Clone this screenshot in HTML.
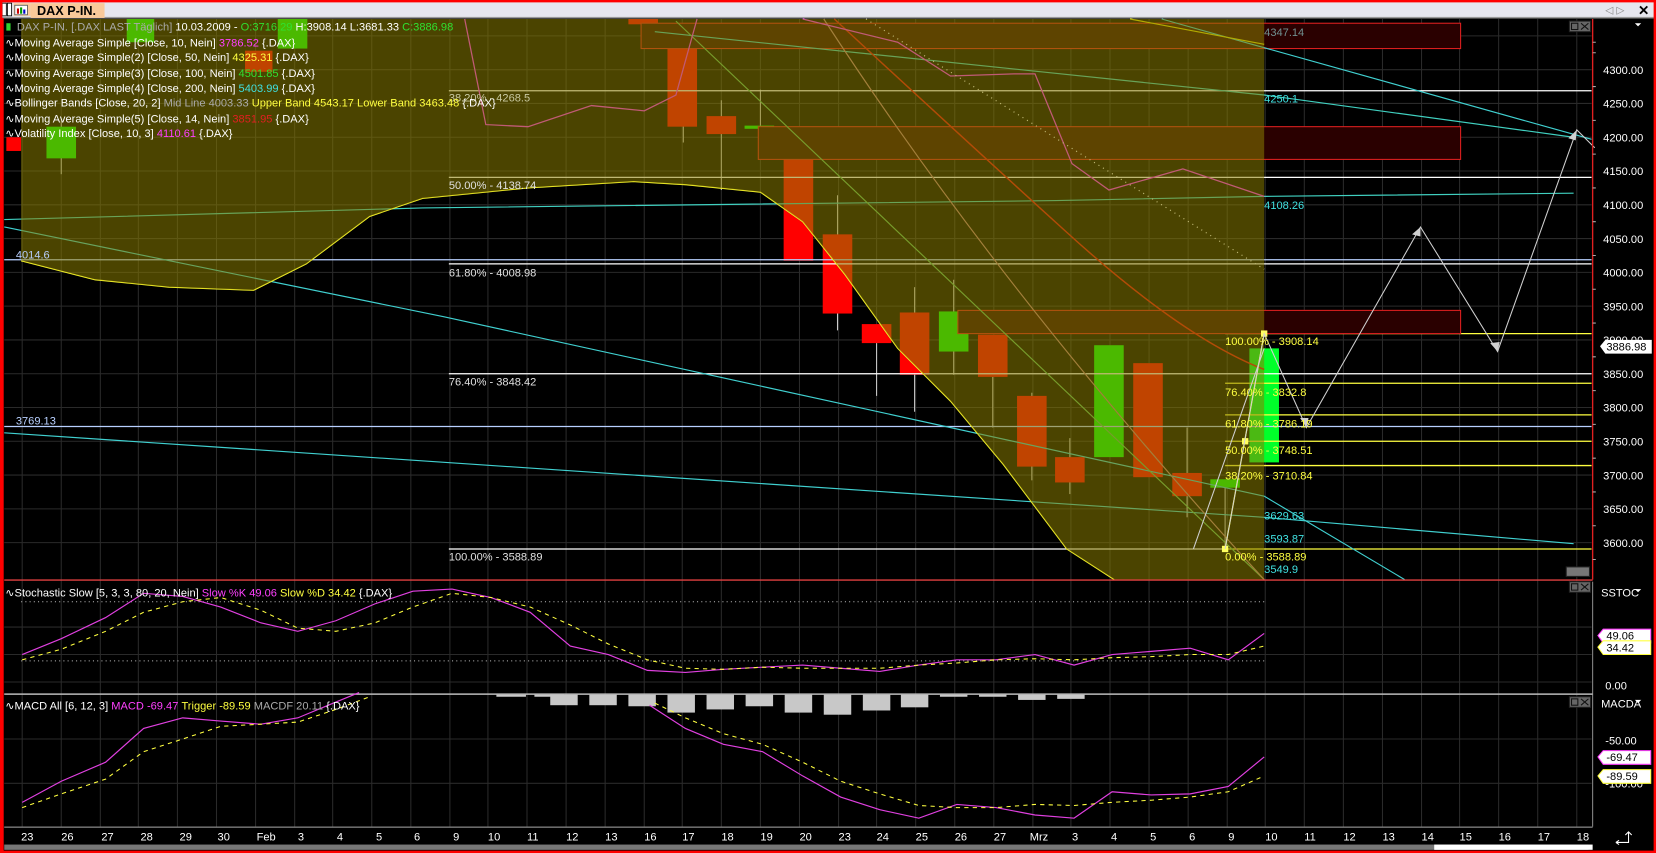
<!DOCTYPE html>
<html><head><meta charset="utf-8"><style>
html,body{margin:0;padding:0;background:#000;overflow:hidden}
svg{display:block}
text{font-family:"Liberation Sans",sans-serif;font-size:10.5px}
</style></head><body>
<svg width="1656" height="853" viewBox="0 0 1568 808" preserveAspectRatio="none" xmlns="http://www.w3.org/2000/svg">
<rect x="0" y="0" width="1568" height="808" fill="#000"/>
<!-- title bar -->
<rect x="0" y="0" width="1568" height="17" fill="#e6e6ee"/>
<rect x="0" y="16" width="1568" height="1.5" fill="#999"/>
<rect x="2" y="3" width="4" height="12" fill="#fff" stroke="#000" stroke-width="0.8"/>
<rect x="7" y="3" width="4" height="12" fill="#fff" stroke="#000" stroke-width="0.8"/>
<rect x="13" y="3" width="16" height="12" fill="#f9c99a"/>
<rect x="14" y="5" width="12" height="9" fill="#fff" stroke="#555" stroke-width="0.8"/>
<rect x="16" y="8" width="2" height="5" fill="#c00"/><rect x="19" y="7" width="2" height="6" fill="#090"/><rect x="22" y="9" width="2" height="4" fill="#00c"/>
<rect x="29" y="3" width="70" height="14" fill="#f9c99a"/>
<text x="35" y="14" style="font-size:12px;font-weight:bold" fill="#000">DAX P-IN.</text>
<text x="1520" y="13" fill="#888" style="font-size:10px">◁ ▷</text>
<text x="1551" y="14" fill="#000" style="font-size:13px;font-weight:bold">✕</text>

<!-- grid -->
<g stroke="#2a2a2a" stroke-width="1">
<path d="M21 18V783M58 18V783M95 18V783M131 18V783M168 18V783M205 18V783M242 18V783M279 18V783M315 18V783M352 18V783M389 18V783M426 18V783M462 18V783M499 18V783M536 18V783M573 18V783M610 18V783M646 18V783M683 18V783M720 18V783M757 18V783M794 18V783M830 18V783M867 18V783M904 18V783M941 18V783M978 18V783M1014 18V783M1051 18V783M1088 18V783M1125 18V783M1162 18V783M1198 18V783M1235 18V783M1272 18V783M1309 18V783M1346 18V783M1382 18V783M1419 18V783M1456 18V783M1493 18V783"/>
<path d="M4 34H1507M4 66H1507M4 98H1507M4 130H1507M4 162H1507M4 194H1507M4 226H1507M4 258H1507M4 290H1507M4 322H1507M4 354H1507M4 386H1507M4 418H1507M4 450H1507M4 482H1507M4 514H1507M4 594H1507M4 620H1507M4 646H1507M4 700H1507M4 742H1507"/>
</g>

<!-- candles -->
<g>
<rect x="6" y="130" width="14" height="13" fill="#ff0000"/>
<line x1="58" y1="115" x2="58" y2="165" stroke="#ccc"/><rect x="44" y="120" width="28" height="30" fill="#00ff00"/>
<rect x="120" y="18" width="26" height="22" fill="#00ff00"/>
<rect x="232" y="48" width="26" height="20" fill="#ff0000"/>
<rect x="263" y="18" width="28" height="28" fill="#00ff00"/>
<rect x="595" y="18" width="28" height="5" fill="#ff0000"/>
<line x1="647" y1="40" x2="647" y2="135" stroke="#ccc"/><rect x="632" y="45" width="28" height="75" fill="#ff0000"/>
<line x1="683" y1="95" x2="683" y2="180" stroke="#ccc"/><rect x="669" y="110" width="28" height="17" fill="#ff0000"/>
<rect x="705" y="119" width="28" height="3" fill="#00ff00"/><line x1="720" y1="85" x2="720" y2="119" stroke="#ccc"/>
<rect x="742" y="150" width="28" height="97" fill="#ff0000"/>
<line x1="793" y1="185" x2="793" y2="313" stroke="#ccc"/><rect x="779" y="222" width="28" height="75" fill="#ff0000"/>
<line x1="830" y1="325" x2="830" y2="375" stroke="#ccc"/><rect x="816" y="307" width="28" height="18" fill="#ff0000"/>
<line x1="866" y1="272" x2="866" y2="390" stroke="#ccc"/><rect x="852" y="296" width="28" height="59" fill="#ff0000"/>
<line x1="903" y1="265" x2="903" y2="355" stroke="#ccc"/><rect x="889" y="295" width="28" height="38" fill="#00ff00"/>
<line x1="940" y1="357" x2="940" y2="405" stroke="#ccc"/><rect x="926" y="317" width="28" height="40" fill="#ff0000"/>
<line x1="977" y1="372" x2="977" y2="455" stroke="#ccc"/><rect x="963" y="375" width="28" height="67" fill="#ff0000"/>
<line x1="1013" y1="415" x2="1013" y2="468" stroke="#ccc"/><rect x="999" y="433" width="28" height="24" fill="#ff0000"/>
<rect x="1036" y="327" width="28" height="106" fill="#00ff00"/>
<rect x="1073" y="344" width="28" height="108" fill="#ff0000"/>
<line x1="1124" y1="405" x2="1124" y2="490" stroke="#ccc"/><rect x="1110" y="448" width="28" height="22" fill="#ff0000"/>
<line x1="1160" y1="462" x2="1160" y2="520" stroke="#ccc"/><rect x="1146" y="454" width="28" height="8" fill="#00ff00"/>
<rect x="1183" y="330" width="28" height="108" fill="#00ff2a"/>
</g>

<!-- horizontal lines -->
<g stroke-width="1.2">
<line x1="425" y1="86" x2="1507" y2="86" stroke="#fff"/>
<line x1="425" y1="168" x2="1507" y2="168" stroke="#fff"/>
<line x1="425" y1="250" x2="1507" y2="250" stroke="#fff"/>
<line x1="4" y1="246" x2="1507" y2="246" stroke="#b8d0ff"/>
<line x1="425" y1="354" x2="1507" y2="354" stroke="#fff"/>
<line x1="425" y1="520" x2="1160" y2="520" stroke="#fff"/>
<line x1="4" y1="404" x2="1507" y2="404" stroke="#b8d0ff"/>
<line x1="1160" y1="316" x2="1507" y2="316" stroke="#ffff40"/>
<line x1="1160" y1="363" x2="1507" y2="363" stroke="#ffff40"/>
<line x1="1160" y1="393" x2="1507" y2="393" stroke="#ffff40"/>
<line x1="1160" y1="418" x2="1507" y2="418" stroke="#ffff40"/>
<line x1="1160" y1="441" x2="1507" y2="441" stroke="#ffff40"/>
<line x1="1160" y1="520" x2="1507" y2="520" stroke="#ffff40"/>
</g>
<!-- red boxes -->
<g fill="#2a0000" stroke="#e02020" stroke-width="1">
<rect x="607" y="22" width="776" height="24"/>
<rect x="718" y="120" width="665" height="31"/>
<rect x="907" y="294" width="476" height="22"/>
</g>
<!-- trend lines -->
<g fill="none" stroke-width="1.1">
<path d="M4 208L400 197 1000 190 1197 186 1490 183" stroke="#40d0c0"/>
<path d="M4 215L420 300 1197 470 1330 549" stroke="#40d0d0"/>
<path d="M4 410L1197 490 1490 515" stroke="#40d0d0"/>
<path d="M4 405L1100 520" stroke="#40d0d0" stroke-opacity="0"/>
<path d="M620 30L1197 90 1490 130" stroke="#40d0c0"/>
<path d="M1100 18L1507 132" stroke="#40d0d0"/>
<path d="M640 20L1197 549" stroke="#60c060"/>
<path d="M4 215L1197 549" stroke="#60c060" stroke-opacity="0"/>
<path d="M1070 18L1197 42" stroke="#e0e000"/>
<path d="M790 18Q900 120 1010 220T1197 350" stroke="#e01010" stroke-width="1.4"/>
<path d="M780 18Q950 280 1197 549" stroke="#c08080"/>
<path d="M440 18L460 118 500 120 560 100 610 105 640 90 660 18M760 18L850 40 900 72 960 70 980 70 1015 155 1050 180 1120 160 1197 186" stroke="#ff30ff" stroke-width="1.2"/>
<path d="M820 18L1197 255" stroke="#fff" stroke-dasharray="1 4"/>
<path d="M20 247L90 265 160 272 240 275 290 250 350 205 400 188 500 178 600 172 650 175 720 182 760 210 800 260 850 330 900 380 950 440 1010 520 1055 549" stroke="#ffff30"/>
</g>
<!-- olive band overlay -->
<path d="M20 18H1197V549H1055L1010 520 950 440 900 380 850 330 800 260 760 210 720 182 650 175 600 172 500 178 400 188 350 205 290 250 240 275 160 272 90 265 20 247Z" fill="rgba(138,125,0,0.54)"/>
<!-- fib diagonal + arrows -->
<path d="M1160 520L1197 316" stroke="#ffff30" stroke-width="1.2" fill="none"/>
<rect x="1157" y="517" width="6" height="6" fill="#ffff60"/><rect x="1194" y="313" width="6" height="6" fill="#ffff60"/><rect x="1176" y="415" width="6" height="6" fill="#ffff60"/>
<path d="M1160 520L1197 316 1237 405 1345 215 1418 333 1493 123 1510 140M1130 520L1197 330" stroke="#d0d0d0" stroke-width="1" fill="none"/>
<path d="M1237 405l-6-9 8 0zM1345 215l-8 7 8 2zM1418 333l-7-8 9-1zM1493 123l-8 8 7 2z" fill="#d0d0d0"/>

<!-- labels -->
<g fill="#e0e0e0">
<text x="425" y="96" fill="#c8c8a0">38.20% - 4268.5</text>
<text x="425" y="179">50.00% - 4138.74</text>
<text x="425" y="262">61.80% - 4008.98</text>
<text x="425" y="365">76.40% - 3848.42</text>
<text x="425" y="531">100.00% - 3588.89</text>
<text x="15" y="245" fill="#b8d0ff">4014.6</text>
<text x="15" y="402" fill="#b8d0ff">3769.13</text>
</g>
<g fill="#ffff40">
<text x="1160" y="327">100.00% - 3908.14</text>
<text x="1160" y="375">76.40% - 3832.8</text>
<text x="1160" y="405">61.80% - 3786.19</text>
<text x="1160" y="430">50.00% - 3748.51</text>
<text x="1160" y="454">38.20% - 3710.84</text>
<text x="1160" y="531">0.00% - 3588.89</text>
</g>
<g fill="#40e0e0">
<text x="1197" y="34" fill="#709090">4347.14</text>
<text x="1197" y="97">4250.1</text>
<text x="1197" y="198">4108.26</text>
<text x="1197" y="492">3629.63</text>
<text x="1197" y="514">3593.87</text>
<text x="1197" y="543">3549.9</text>
</g>

<!-- legend -->
<g fill="#fff">
<rect x="6" y="22" width="4" height="7" fill="#30d030"/>
<text x="16" y="29"><tspan fill="#aaa">DAX P-IN. [.DAX LAST Täglich]</tspan> 10.03.2009 - <tspan fill="#30e030">O:3716.29</tspan> H:3908.14 L:3681.33 <tspan fill="#30e030">C:3886.98</tspan></text>
<text x="5" y="44">∿Moving Average Simple [Close, 10, Nein] <tspan fill="#ff40ff">3786.52</tspan> {.DAX}</text>
<text x="5" y="58">∿Moving Average Simple(2) [Close, 50, Nein] <tspan fill="#ffff40">4325.31</tspan> {.DAX}</text>
<text x="5" y="73">∿Moving Average Simple(3) [Close, 100, Nein] <tspan fill="#30e030">4501.85</tspan> {.DAX}</text>
<text x="5" y="87">∿Moving Average Simple(4) [Close, 200, Nein] <tspan fill="#40e0e0">5403.99</tspan> {.DAX}</text>
<text x="5" y="101">∿Bollinger Bands [Close, 20, 2] <tspan fill="#aaa">Mid Line 4003.33</tspan> <tspan fill="#ffff40">Upper Band 4543.17 Lower Band 3463.48</tspan> {.DAX}</text>
<text x="5" y="116">∿Moving Average Simple(5) [Close, 14, Nein] <tspan fill="#e02020">3851.95</tspan> {.DAX}</text>
<text x="5" y="130">∿Volatility Index [Close, 10, 3] <tspan fill="#ff40ff">4110.61</tspan> {.DAX}</text>
</g>

<!-- panel icons -->
<g fill="#666" stroke="#222">
<rect x="1486" y="20" width="20" height="10"/>
<rect x="1486" y="551" width="20" height="10"/>
<rect x="1486" y="660" width="20" height="10"/>
<rect x="1483" y="537" width="22" height="9" fill="#777"/>
</g>
<g fill="none" stroke="#111" stroke-width="1">
<rect x="1488" y="22" width="6" height="6"/><path d="M1497 22l7 6m0-6l-7 6"/>
<rect x="1488" y="553" width="6" height="6"/><path d="M1497 553l7 6m0-6l-7 6"/>
<rect x="1488" y="662" width="6" height="6"/><path d="M1497 662l7 6m0-6l-7 6"/>
</g>

<!-- panel borders -->
<line x1="4" y1="549.5" x2="1508" y2="549.5" stroke="#e04040" stroke-width="1.3"/>
<line x1="1508" y1="18" x2="1508" y2="549" stroke="#e02020" stroke-width="1.3"/>
<line x1="1508" y1="551" x2="1508" y2="783" stroke="#888"/>
<line x1="4" y1="657.5" x2="1508" y2="657.5" stroke="#bbb" stroke-width="1.5"/>
<line x1="4" y1="783.5" x2="1508" y2="783.5" stroke="#aaa"/>

<!-- stochastic -->
<g fill="none">
<path d="M20 570H1197M20 626H1197" stroke="#bbb" stroke-dasharray="1 3"/>
<path d="M21 620L58 605 100 585 136 562 173 565 209 575 247 590 282 598 318 588 355 572 391 560 428 558 465 566 502 580 540 612 576 620 613 635 649 637 685 634 722 632 760 630 796 633 833 636 870 630 906 625 943 625 980 620 1017 630 1053 620 1090 617 1127 614 1163 625 1197 600" stroke="#e040e0" stroke-width="1.1"/>
<path d="M21 625L58 615 100 598 136 580 173 570 209 566 247 578 282 595 318 598 355 590 391 575 428 562 465 566 502 575 540 592 576 610 613 625 649 633 685 634 722 632 760 633 796 633 833 633 870 630 906 628 943 625 980 624 1017 625 1053 623 1090 622 1127 620 1163 620 1197 612" stroke="#ffff40" stroke-dasharray="4 4"/>
</g>
<text x="5" y="565" fill="#fff">∿Stochastic Slow [5, 3, 3, 80, 20, Nein] <tspan fill="#ff40ff">Slow %K 49.06</tspan> <tspan fill="#ffff40">Slow %D 34.42</tspan> {.DAX}</text>

<!-- MACD -->
<g fill="#c8c8c8">
<rect x="470" y="658" width="28" height="2"/><rect x="506" y="658" width="28" height="2"/>
<rect x="521" y="658" width="26" height="10"/><rect x="558" y="658" width="26" height="10"/><rect x="595" y="658" width="26" height="11"/>
<rect x="632" y="658" width="26" height="17"/><rect x="669" y="658" width="26" height="14"/><rect x="706" y="658" width="26" height="11"/>
<rect x="743" y="658" width="26" height="17"/><rect x="780" y="658" width="26" height="19"/><rect x="817" y="658" width="26" height="15"/>
<rect x="853" y="658" width="26" height="12"/><rect x="890" y="658" width="26" height="2"/><rect x="927" y="658" width="26" height="2"/>
<rect x="964" y="658" width="26" height="5"/><rect x="1001" y="658" width="26" height="4"/>
</g>
<g fill="none">
<path d="M21 760L58 740 100 722 136 690 173 680 209 683 247 686 282 680 318 665 340 656M615 668L649 690 685 705 722 712 760 735 796 755 833 767 870 775 906 762 943 765 980 772 1017 775 1053 750 1090 753 1127 752 1163 745 1197 717" stroke="#e040e0" stroke-width="1.1"/>
<path d="M21 765L58 752 100 738 136 712 173 700 209 688 247 686 282 684 318 672 350 660M620 666L649 680 685 695 722 705 760 722 796 740 833 752 870 763 906 765 943 765 980 762 1017 763 1053 760 1090 758 1127 755 1163 750 1197 735" stroke="#ffff40" stroke-dasharray="4 4"/>
</g>
<text x="5" y="672" fill="#fff">∿MACD All [6, 12, 3] <tspan fill="#ff40ff">MACD -69.47</tspan> <tspan fill="#ffff40">Trigger -89.59</tspan> <tspan fill="#aaa">MACDF 20.11</tspan> {.DAX}</text>

<!-- right axis -->
<g fill="#fff">
<text x="1518" y="70">4300.00</text><text x="1518" y="102">4250.00</text><text x="1518" y="134">4200.00</text><text x="1518" y="166">4150.00</text>
<text x="1518" y="198">4100.00</text><text x="1518" y="230">4050.00</text><text x="1518" y="262">4000.00</text><text x="1518" y="294">3950.00</text>
<text x="1518" y="326">3900.00</text><text x="1518" y="358">3850.00</text><text x="1518" y="390">3800.00</text><text x="1518" y="422">3750.00</text>
<text x="1518" y="454">3700.00</text><text x="1518" y="486">3650.00</text><text x="1518" y="518">3600.00</text>
<text x="1516" y="565">SSTOC</text><text x="1516" y="670">MACDA</text>
<text x="1520" y="653">0.00</text><text x="1520" y="705">-50.00</text><text x="1520" y="746">-100.00</text>
</g>
<path d="M1548 22h6l-3 3z M1548 558h6l-3 3z M1548 663h6l-3 3z" fill="#fff"/>
<g stroke="#aaa"><path d="M1508 40h3M1508 50h3M1508 82h3M1508 114h3M1508 146h3M1508 178h3M1508 210h3M1508 242h3M1508 274h3M1508 306h3M1508 338h3M1508 370h3M1508 402h3M1508 434h3M1508 466h3M1508 498h3M1508 530h3"/></g>
<path d="M1515 328l5-6h44v13h-44z" fill="#fff"/><text x="1521" y="332" fill="#000">3886.98</text>
<path d="M1513 602l5-6h45v13h-45z" fill="#fff" stroke="#ff40ff"/><text x="1521" y="606" fill="#000">49.06</text>
<path d="M1513 613l5-6h45v13h-45z" fill="#fff" stroke="#ffff40"/><text x="1521" y="617" fill="#000">34.42</text>
<path d="M1513 717l5-6h45v13h-45z" fill="#fff" stroke="#ff40ff"/><text x="1521" y="721" fill="#000">-69.47</text>
<path d="M1513 735l5-6h45v13h-45z" fill="#fff" stroke="#ffff40"/><text x="1521" y="739" fill="#000">-89.59</text>

<!-- date axis -->
<g fill="#fff" style="font-size:11px">
<text x="20" y="796">23</text><text x="58" y="796">26</text><text x="96" y="796">27</text><text x="133" y="796">28</text><text x="170" y="796">29</text><text x="206" y="796">30</text><text x="243" y="796">Feb</text><text x="282" y="796">3</text><text x="319" y="796">4</text><text x="356" y="796">5</text><text x="392" y="796">6</text><text x="429" y="796">9</text><text x="462" y="796">10</text><text x="499" y="796">11</text><text x="536" y="796">12</text><text x="573" y="796">13</text><text x="610" y="796">16</text><text x="646" y="796">17</text><text x="683" y="796">18</text><text x="720" y="796">19</text><text x="757" y="796">20</text><text x="794" y="796">23</text><text x="830" y="796">24</text><text x="867" y="796">25</text><text x="904" y="796">26</text><text x="941" y="796">27</text><text x="975" y="796">Mrz</text><text x="1015" y="796">3</text><text x="1052" y="796">4</text><text x="1089" y="796">5</text><text x="1126" y="796">6</text><text x="1163" y="796">9</text><text x="1198" y="796">10</text><text x="1235" y="796">11</text><text x="1272" y="796">12</text><text x="1309" y="796">13</text><text x="1346" y="796">14</text><text x="1382" y="796">15</text><text x="1419" y="796">16</text><text x="1456" y="796">17</text><text x="1493" y="796">18</text>
</g>
<rect x="4" y="800" width="1500" height="5" fill="#777"/>
<rect x="1358" y="800" width="150" height="5" fill="#fff"/>
<path d="M1530 798h12v-10M1539 791l3-3 3 3M1530 798l3-2m-3 2l3 2" stroke="#fff" fill="none"/>
<!-- red frame -->
<rect x="1" y="1" width="1566" height="806" fill="none" stroke="#ff0000" stroke-width="2.5"/>
<line x1="2.5" y1="17" x2="2.5" y2="808" stroke="#ff0000" stroke-width="2"/>
</svg>
</body></html>
